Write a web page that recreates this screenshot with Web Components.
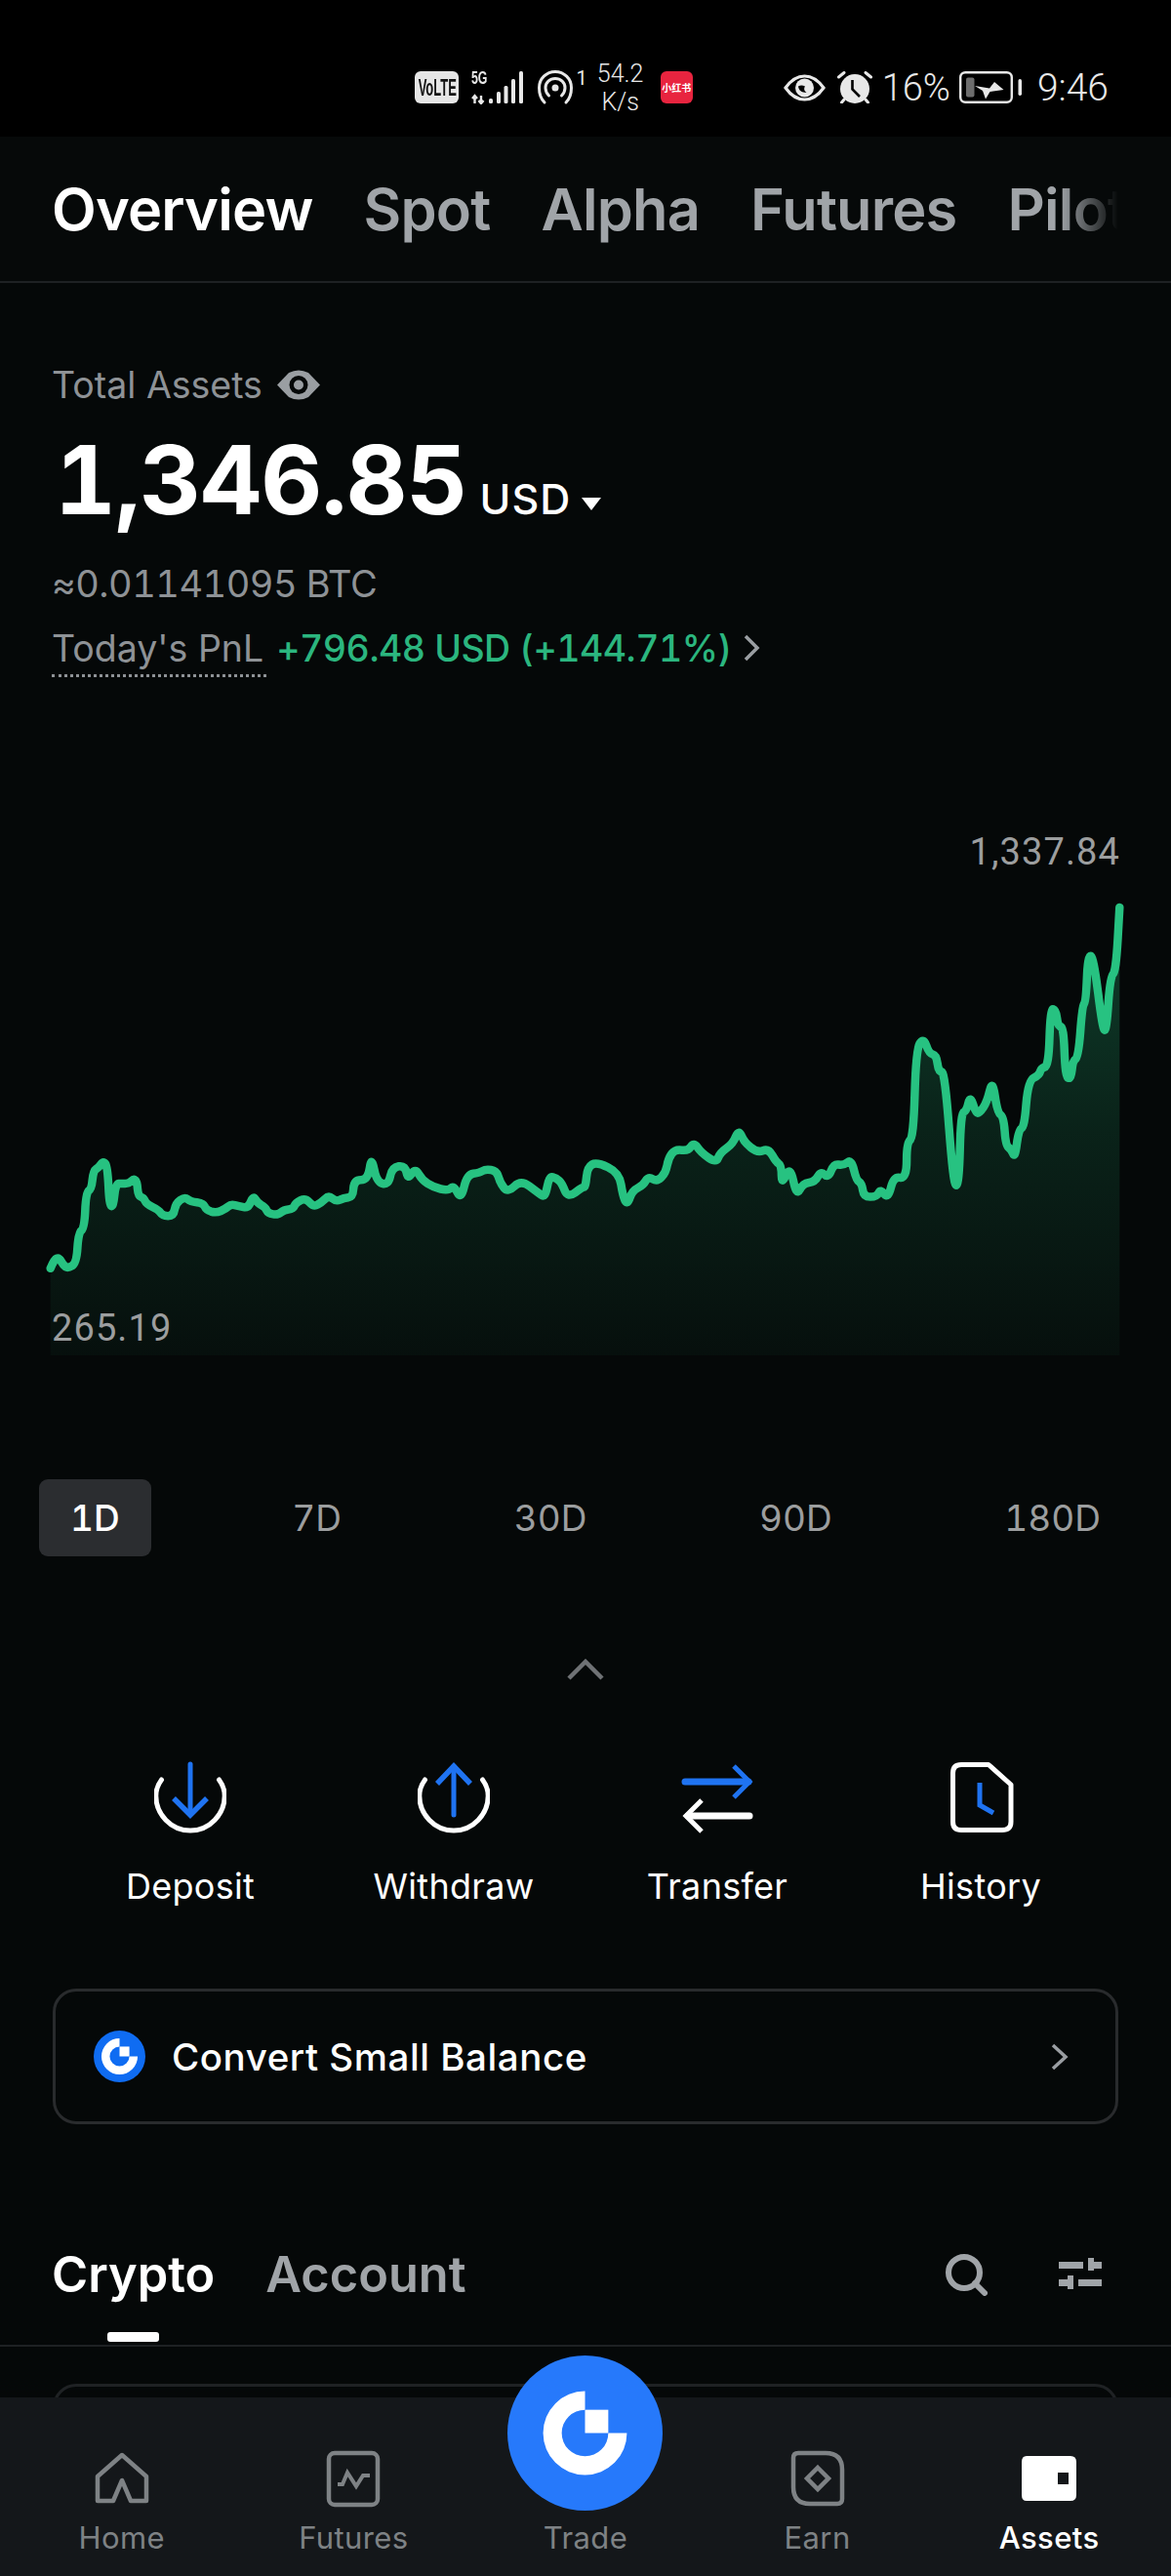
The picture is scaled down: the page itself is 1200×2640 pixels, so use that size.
<!DOCTYPE html>
<html>
<head>
<meta charset="utf-8">
<title>Assets</title>
<style>
  html, body { margin: 0; padding: 0; background: #050808; }
  body { position: relative; width: 1200px; height: 2640px; overflow: hidden; font-family: Inter, "Liberation Sans", sans-serif; color: #fff; }
</style>
</head>
<body>
<status-bar></status-bar>
<top-tabs>
  <tab-label active>Overview</tab-label>
  <tab-label>Spot</tab-label>
  <tab-label>Alpha</tab-label>
  <tab-label>Futures</tab-label>
  <tab-label>Pilot</tab-label>
</top-tabs>
<asset-summary></asset-summary>
<asset-chart></asset-chart>
<period-tabs></period-tabs>
<action-row>
  <action-item type="deposit">Deposit</action-item>
  <action-item type="withdraw">Withdraw</action-item>
  <action-item type="transfer">Transfer</action-item>
  <action-item type="history">History</action-item>
</action-row>
<convert-card>Convert Small Balance</convert-card>
<section-tabs></section-tabs>
<coin-card></coin-card>
<bottom-nav>
  <nav-item type="home">Home</nav-item>
  <nav-item type="futures">Futures</nav-item>
  <nav-item type="trade">Trade</nav-item>
  <nav-item type="earn">Earn</nav-item>
  <nav-item type="assets" active>Assets</nav-item>
</bottom-nav>

<script>
class BaseEl extends HTMLElement {
  constructor() {
    super();
    this.shadow = this.attachShadow({ mode: 'open' });
  }

  connectedCallback() {
    this.render();
  }
}

class GateLogo extends BaseEl {
  render() {
    const size = this.getAttribute('size');
    const r = +this.getAttribute('r');
    const i = +this.getAttribute('inner');
    this.shadow.innerHTML = `
      <style>:host { display: block; width: ${size}px; height: ${size}px; } svg { display: block; }</style>
      <svg width="${size}" height="${size}" viewBox="-100 -100 200 200">
        <circle r="100" fill="${this.getAttribute('color')}"/>
        <path fill="#fff" d="M0 ${-r}A${r} ${r} 0 1 0 ${r} 0H${i}A${i} ${i} 0 1 1 0 ${-i}Z"/>
        <rect x="0" y="${-i}" width="${i}" height="${i}" fill="#fff"/>
      </svg>`;
  }
}

class StatusBar extends BaseEl {
  render() {
    this.shadow.innerHTML = `
      <style>
        :host { display: flex; justify-content: flex-end; align-items: center; box-sizing: border-box; height: 140px; padding: 39px 64px 0 0; background: #000; color: #e8e8e8; font-family: Roboto, sans-serif; font-weight: 300; }
        svg { display: block; flex: none; }
        .volte { width: 45px; height: 33px; border-radius: 6px; background: #e6e6e6; color: #111; display: flex; align-items: center; justify-content: center; font: 700 24px "Liberation Sans", sans-serif; overflow: hidden; }
        .volte span { flex: none; transform: scaleX(.54); }
        .net { position: relative; width: 53px; height: 34px; margin-left: 13px; }
        .five { position: absolute; left: 0; top: -2px; font: 700 19px/18px "Liberation Sans", sans-serif; transform: scaleX(.65); transform-origin: left; }
        .net svg { position: absolute; left: 0; top: 0; }
        .hot { margin-left: 15px; }
        .one { font-size: 20px; margin: 0 0 20px 3px; line-height: 26px; font-weight: 400; }
        .speed { width: 62px; margin-left: 3px; text-align: center; font-size: 25px; line-height: 29px; font-weight: 300; }
        .red { width: 33px; height: 33px; margin-left: 10px; border-radius: 6px; background: #e8243f; color: #fff; font: 700 10px/33px "Noto Sans CJK SC", sans-serif; text-align: center; overflow: hidden; white-space: nowrap; }
        .eye { margin-left: 93px; }
        .alarm { margin-left: 12px; }
        .pct { margin-left: 10px; font-size: 38px; line-height: 40px; }
        .bat { margin-left: 9px; }
        .time { margin-left: 15px; font-size: 39px; line-height: 40px; }
      </style>
      <div class="volte"><span>VoLTE</span></div>
      <div class="net">
        <span class="five">5G</span>
        <svg width="53" height="34" viewBox="0 0 53 34" fill="#e8e8e8">
          <path d="M3.500 33V25M1 28L3.500 25L6 28M10 25V33M7.500 30L10 33L12.500 30" fill="none" stroke="#e8e8e8" stroke-width="2.400"/>
          <rect x="18" y="28" width="4" height="5" rx="1.500"/>
          <rect x="26" y="21" width="4" height="12" rx="1.500"/>
          <rect x="33.500" y="15" width="4" height="18" rx="1.500"/>
          <rect x="41" y="8" width="4" height="25" rx="1.500"/>
          <rect x="49" y="0" width="4" height="33" rx="1.500"/>
        </svg>
      </div>
      <svg class="hot" width="36" height="36" viewBox="0 0 36 36" fill="none" stroke="#e8e8e8" stroke-width="3" stroke-linecap="round">
        <path d="M7 33C3.500 29.500 1.500 24 1.500 18C1.500 8.500 9 1.500 18 1.500C27 1.500 34.500 8.500 34.500 18C34.500 24 32.500 29.500 29 33"/>
        <path d="M11.500 26C9 23.500 8 21 8 18C8 12.500 12.500 8.500 18 8.500C23.500 8.500 28 12.500 28 18C28 21 27 23.500 24.500 26"/>
        <circle cx="18" cy="18" r="3.500" fill="#e8e8e8" stroke="none"/>
      </svg>
      <span class="one">1</span>
      <div class="speed">54.2<br>K/s</div>
      <div class="red">小红书</div>
      <svg class="eye" width="43" height="28" viewBox="0 0 43 28">
        <path d="M2 14C8 5.500 14 2 21.500 2S35 5.500 41 14C35 22.500 29 26 21.500 26S8 22.500 2 14Z" fill="none" stroke="#e8e8e8" stroke-width="3.200"/>
        <circle cx="21.500" cy="14" r="9.500" fill="#e8e8e8"/>
        <path d="M15 12.500C15.500 17 19.500 19.500 23.500 18.500C21 17.500 20.500 14.500 22 12.500C19.500 11 17 11 15 12.500Z" fill="#000"/>
      </svg>
      <svg class="alarm" width="36" height="33" viewBox="0 0 36 33">
        <circle cx="18" cy="18" r="15" fill="#e8e8e8"/>
        <path d="M1.500 6L7 1.500M34.500 6L29 1.500M7 29L4.500 32M29 29L31.500 32" stroke="#e8e8e8" stroke-width="3" stroke-linecap="round"/>
        <path d="M15.500 9V18.500L23 26" fill="none" stroke="#000" stroke-width="2.600"/>
      </svg>
      <span class="pct">16%</span>
      <svg class="bat" width="65" height="33" viewBox="0 0 65 33">
        <rect x="1.200" y="1.200" width="52.600" height="30.600" rx="5" fill="none" stroke="#e8e8e8" stroke-width="2.400"/>
        <rect x="7" y="6.500" width="8.500" height="20" rx="2" fill="#6d6d6d"/>
        <path d="M16 15L31 17.500L36 11L45.500 19L31.500 21L27 28.500L24 20Z" fill="#e8e8e8"/>
        <rect x="60.500" y="8" width="3.500" height="17" rx="1.700" fill="#e8e8e8"/>
      </svg>
      <span class="time">9:46</span>`;
  }
}

class TabLabel extends BaseEl {
  render() {
    this.shadow.innerHTML = `
      <style>
        :host { display: block; flex: none; color: #a0a4a8; }
        :host([active]) { color: #fff; }
      </style>
      <slot></slot>`;
  }
}

class TopTabs extends BaseEl {
  render() {
    this.shadow.innerHTML = `
      <style>
        :host { display: block; box-sizing: border-box; height: 150px; padding: 0 54px 0 53px; border-bottom: 2px solid #1e2123; background: #060909; }
        .row { display: flex; gap: 52px; overflow: hidden; height: 148px; align-items: center; box-sizing: border-box;
          font-size: 59.500px; font-weight: 600; letter-spacing: -.8px; white-space: nowrap;
          -webkit-mask-image: linear-gradient(to right, #000 calc(100% - 60px), transparent); mask-image: linear-gradient(to right, #000 calc(100% - 60px), transparent); }
      </style>
      <div class="row"><slot></slot></div>`;
  }
}

class AssetSummary extends BaseEl {
  render() {
    this.shadow.innerHTML = `
      <style>
        :host { display: block; box-sizing: border-box; height: 540px; padding: 80px 54px 0 53px; color: #8e9296; font-size: 37.500px; }
        .head { display: flex; align-items: center; gap: 14px; height: 48px; }
        .total { display: flex; align-items: baseline; height: 124px; color: #fff; margin-top: 12px; }
        .num { font-size: 97.500px; font-weight: 700; line-height: 124px; letter-spacing: -1px; margin-left: 3px; font-feature-settings: "tnum"; }
        .unit { font-size: 43px; font-weight: 500; margin-left: 13px; letter-spacing: 1px; }
        .caret { width: 0; height: 0; border: 10.500px solid transparent; border-top: 13px solid #fff; border-bottom: 0; margin: 0 0 31px 11px; align-self: flex-end; }
        .btc { height: 48px; line-height: 48px; margin-top: 20px; font-size: 38px; letter-spacing: -.5px; font-feature-settings: "tnum"; }
        .pnl { display: flex; align-items: center; height: 48px; margin-top: 18px; }
        .pnl-l { position: relative; }
        .pnl-l::after { content: ""; position: absolute; left: 0; right: -3px; bottom: -7px; border-bottom: 3px dotted #8e9296; }
        .pnl-v { color: #2bb67f; font-weight: 500; margin-left: 13px; letter-spacing: -.5px; font-feature-settings: "tnum"; }
        svg { display: block; flex: none; }
      </style>
      <div class="head">
        <span>Total Assets</span>
        <svg width="46" height="33" viewBox="0 0 46 33">
          <path d="M1 16.500L13 4Q23 -1 33 4L45 16.500L33 29Q23 34 13 29Z" fill="#9a9ea2"/>
          <circle cx="23" cy="16.500" r="9.500" fill="#050808"/>
          <circle cx="23" cy="16.500" r="5" fill="#9a9ea2"/>
        </svg>
      </div>
      <div class="total"><span class="num">1,346.85</span><span class="unit">USD</span><span class="caret"></span></div>
      <div class="btc">≈0.01141095 BTC</div>
      <div class="pnl">
        <span class="pnl-l">Today's PnL</span>
        <span class="pnl-v">+796.48 USD (+144.71%)</span>
        <svg style="margin-left:11px" width="19" height="28" viewBox="0 0 19 28" fill="none" stroke="#9a9ea2" stroke-width="3.500"><path d="M3 2L15 14L3 26"/></svg>
      </div>`;
  }
}

class AssetChart extends BaseEl {
  buildPath() {
    const left = [[135,1270],[145,1245],[158,1240],[170,1262],[182,1270],[205,1255],[210,1170],[226,1160],[230,1060],[245,1050],[250,1000],[265,990],[277,972],[288,990],[293,1095],[303,1100],[310,1035],[325,1035],[345,1035],[358,1022],[367,1030],[370,1070],[385,1075],[392,1092],[425,1108],[435,1125],[465,1125],[470,1090],[495,1072],[510,1085],[545,1090],[552,1108],[578,1117],[605,1105],[618,1092],[640,1098],[665,1103],[678,1068],[690,1090],[710,1100],[718,1118],[745,1122],[760,1108],[785,1105],[792,1088],[818,1075],[840,1100],[860,1088],[880,1068],[900,1085],[920,1075],[945,1072],[948,1025],[985,1025],[995,958],[1008,1030],[1040,1040],[1050,990],[1085,985],[1092,1025],[1112,992],[1130,1025],[1160,1045],[1200,1055],[1215,1040],[1235,1080],[1250,1010],[1285,1005],[1300,995],[1330,1000],[1340,1035],[1360,1060],[1395,1025],[1440,1060],[1460,1075],[1470,1015],[1490,1020],[1505,1035],[1520,1075],[1560,1045]];
    const right = [[0,1045],[5,990],[30,975],[90,1005],[100,1070],[112,1095],[125,1055],[155,1040],[168,1015],[192,1030],[215,1005],[222,965],[240,940],[275,945],[290,920],[310,950],[350,978],[360,950],[395,925],[410,885],[425,920],[460,950],[490,938],[510,975],[525,985],[525,1040],[548,985],[565,1070],[582,1035],[615,1030],[630,1000],[650,1020],[665,980],[690,985],[712,968],[725,1025],[740,1035],[745,1072],[780,1072],[790,1050],[810,1078],[825,1015],[860,1022],[860,920],[878,910],[885,665],[905,630],[920,675],[940,680],[945,725],[962,725],[985,1040],[1000,1040],[1005,840],[1020,835],[1030,790],[1045,840],[1055,840],[1075,810],[1090,745],[1103,840],[1120,850],[1125,930],[1140,940],[1150,965],[1160,885],[1175,880],[1185,750],[1215,735],[1220,715],[1240,710],[1245,550],[1260,555],[1265,600],[1280,600],[1285,740],[1300,745],[1305,695],[1320,685],[1330,545],[1340,530],[1345,405],[1360,405],[1385,610],[1395,610],[1405,460],[1420,450],[1430,270]];
    const pts = left.map(([x, y]) => [x / 2.613, y / 2.703])
      .concat(right.map(([x, y]) => [600 + x / 2.613, y / 2.703]));
    let d = `M${pts[0][0].toFixed(1)} ${pts[0][1].toFixed(1)}`;
    for (let i = 1; i < pts.length - 1; i++) {
      const mx = (pts[i][0] + pts[i + 1][0]) / 2;
      const my = (pts[i][1] + pts[i + 1][1]) / 2;
      d += `Q${pts[i][0].toFixed(1)} ${pts[i][1].toFixed(1)} ${mx.toFixed(1)} ${my.toFixed(1)}`;
    }
    const last = pts[pts.length - 1];
    d += `L${last[0].toFixed(1)} ${last[1].toFixed(1)}`;
    return { d, x0: pts[0][0].toFixed(1), x1: last[0].toFixed(1) };
  }

  render() {
    const { d, x0, x1 } = this.buildPath();
    this.shadow.innerHTML = `
      <style>
        :host { display: block; position: relative; height: 570px; color: #9c9e9f; font: 38px Roboto, sans-serif; letter-spacing: 1.100px; }
        svg { display: block; position: absolute; left: 0; top: 0; }
        .hi { position: absolute; right: 52px; top: 21px; line-height: 44px; }
        .lo { position: absolute; left: 53px; top: 509px; line-height: 44px; }
      </style>
      <svg width="1200" height="570" viewBox="0 0 1200 570">
        <defs>
          <linearGradient id="fade" gradientUnits="userSpaceOnUse" x1="0" y1="100" x2="0" y2="559">
            <stop offset="0" stop-color="#27c281" stop-opacity=".3"/>
            <stop offset=".5" stop-color="#27c281" stop-opacity=".14"/>
            <stop offset="1" stop-color="#27c281" stop-opacity=".04"/>
          </linearGradient>
        </defs>
        <path d="${d}L${x1} 559L${x0} 559Z" fill="url(#fade)"/>
        <path d="${d}" fill="none" stroke="#27c281" stroke-width="8.500" stroke-linecap="round" stroke-linejoin="round"/>
      </svg>
      <span class="hi">1,337.84</span>
      <span class="lo">265.19</span>`;
  }
}

class PeriodTabs extends BaseEl {
  render() {
    const items = ['1D', '7D', '30D', '90D', '180D'];
    this.shadow.innerHTML = `
      <style>
        :host { display: flex; justify-content: space-between; box-sizing: border-box; height: 79px; margin-top: 116px; padding: 0 40px; color: #9c9e9f; font-size: 37px; letter-spacing: 0; font-feature-settings: "tnum"; }
        span { display: flex; align-items: center; padding: 0 32px; border-radius: 9px; }
        .on { background: #2b2d30; color: #fff; font-weight: 500; }
      </style>
      ${items.map((t, i) => `<span class="${i ? '' : 'on'}">${t}</span>`).join('')}`;
  }
}

class ActionItem extends BaseEl {
  icon(type) {
    const blue = '#1f73f1';
    if (type === 'deposit') {
      return `<path d="M7.500 19C3 25 1.800 30 1.800 35.500C1.800 54 17 71 37 71C57 71 72.200 54 72.200 35.500C72.200 30 71 25 66.500 19" fill="none" stroke="#fff" stroke-width="5" stroke-linecap="round"/>
        <path d="M37 3V52" stroke="${blue}" stroke-width="5" stroke-linecap="round"/>
        <path d="M20 38L37 55L54 38" fill="none" stroke="${blue}" stroke-width="5.500"/>`;
    }
    if (type === 'withdraw') {
      return `<path d="M7.500 19C3 25 1.800 30 1.800 35.500C1.800 54 17 71 37 71C57 71 72.200 54 72.200 35.500C72.200 30 71 25 66.500 19" fill="none" stroke="#fff" stroke-width="5" stroke-linecap="round"/>
        <path d="M37 5V55" stroke="${blue}" stroke-width="5" stroke-linecap="round"/>
        <path d="M20 23L37 5L54 23" fill="none" stroke="${blue}" stroke-width="5.500"/>`;
    }
    if (type === 'transfer') {
      return `<path d="M4 21H69" stroke="${blue}" stroke-width="7" stroke-linecap="round"/>
        <path d="M54 5L70 21L54 37" fill="none" stroke="${blue}" stroke-width="5"/>
        <path d="M70 56H7" stroke="#fff" stroke-width="7" stroke-linecap="round"/>
        <path d="M21 40L5 56L21 72" fill="none" stroke="#fff" stroke-width="5"/>`;
    }
    return `<path d="M12 3.500H40L63 24V62Q63 70.500 54 70.500H12Q3.500 70.500 3.500 62V12Q3.500 3.500 12 3.500Z" transform="translate(5,0)" fill="none" stroke="#fff" stroke-width="5" stroke-linejoin="round"/>
      <path d="M36 22V45L50 53" fill="none" stroke="${blue}" stroke-width="5"/>`;
  }

  render() {
    this.shadow.innerHTML = `
      <style>
        :host { display: flex; flex-direction: column; align-items: center; width: 270px; font-size: 36px; }
        svg { display: block; }
        .t { margin-top: 30px; line-height: 44px; letter-spacing: .3px; }
      </style>
      <svg width="74" height="76" viewBox="0 0 74 76">${this.icon(this.getAttribute('type'))}</svg>
      <span class="t"><slot></slot></span>`;
  }
}

class ActionRow extends BaseEl {
  render() {
    this.shadow.innerHTML = `
      <style>
        :host { display: block; padding: 0 60px; }
        .chev { display: block; margin: 105px auto 83px; }
        .row { display: flex; }
      </style>
      <svg class="chev" width="38" height="22" viewBox="0 0 38 22" fill="none" stroke="#6f7275" stroke-width="4.500"><path d="M2 20L19 3L36 20"/></svg>
      <div class="row"><slot></slot></div>`;
  }
}

class ConvertCard extends BaseEl {
  render() {
    this.shadow.innerHTML = `
      <style>
        :host { display: flex; align-items: center; box-sizing: border-box; height: 139px; margin: 83px 54px 0; padding: 0 47px 0 39px; border: 3px solid #292b2d; border-radius: 24px; font-size: 38.500px; font-weight: 500; letter-spacing: .55px; }
        .t { flex: 1; margin-left: 27px; }
        svg { display: block; }
      </style>
      <gate-logo size="53" r="70" inner="38" color="#0f6cf2"></gate-logo>
      <span class="t"><slot></slot></span>
      <svg width="20" height="30" viewBox="0 0 20 30" fill="none" stroke="#9a9ea2" stroke-width="3.500"><path d="M3 3L16 15L3 27"/></svg>`;
  }
}

class SectionTabs extends BaseEl {
  render() {
    this.shadow.innerHTML = `
      <style>
        :host { display: flex; align-items: flex-start; box-sizing: border-box; height: 228px; padding: 123px 71px 0 53px; border-bottom: 2px solid #1e2123; font-size: 50.500px; font-weight: 600; color: #a0a4a8; }
        .tab { display: flex; flex-direction: column; align-items: center; margin-right: 52px; line-height: 62px; }
        .on { color: #fff; }
        .bar { width: 53px; height: 10px; margin-top: 28px; border-radius: 3px; background: #fff; }
        .space { flex: 1; }
        svg { display: block; }
        .search { margin: 9px 73px 0 0; }
        .filter { margin-top: 14px; }
      </style>
      <div class="tab on">Crypto<div class="bar"></div></div>
      <div class="tab">Account</div>
      <div class="space"></div>
      <svg class="search" width="44" height="44" viewBox="0 0 44 44" fill="none" stroke="#a0a4a8" stroke-width="6"><circle cx="20" cy="20" r="16"/><path d="M31 31L41 41" stroke-linecap="round"/></svg>
      <svg class="filter" width="44" height="34" viewBox="0 0 44 34" fill="#a0a4a8">
        <rect x="0" y="4" width="25" height="7"/><rect x="30" y="0" width="6" height="13"/><rect x="36" y="4" width="8" height="7"/>
        <rect x="0" y="22" width="9" height="7"/><rect x="9" y="18" width="6" height="14"/><rect x="20" y="22" width="24" height="7"/>
      </svg>`;
  }
}

class CoinCard extends BaseEl {
  render() {
    this.shadow.innerHTML = `
      <style>
        :host { display: block; box-sizing: border-box; height: 120px; margin: 38px 54px 0; border: 3px solid #1f2224; border-radius: 24px; }
      </style>`;
  }
}

class NavItem extends BaseEl {
  icon(type) {
    const c = '#7e8285';
    if (type === 'home') {
      return `<path d="M30 5L55 27V52H39L30 31L21 52H5V27Z" fill="none" stroke="${c}" stroke-width="4.500" stroke-linejoin="round"/>`;
    }
    if (type === 'futures') {
      return `<rect x="5" y="3" width="50" height="53" rx="6" fill="none" stroke="${c}" stroke-width="4.500"/>
        <path d="M14 35H19L24 23L33 37L40 26H47" fill="none" stroke="${c}" stroke-width="4"/>`;
    }
    if (type === 'earn') {
      return `<path d="M5 8Q5 3 10 3H38Q55 3 55 20V50Q55 55 50 55H22Q5 55 5 38Z" fill="none" stroke="${c}" stroke-width="4.500"/>
        <path d="M30 18L41 29L30 40L19 29Z" fill="none" stroke="${c}" stroke-width="4.500"/>`;
    }
    if (type === 'assets') {
      return `<path fill-rule="evenodd" fill="#fff" d="M7 6H52Q58 6 58 12V46Q58 52 52 52H7Q2 52 2 46V12Q2 6 7 6ZM39 23V35H50V23Z"/>`;
    }
    return '';
  }

  render() {
    const type = this.getAttribute('type');
    const blob = type === 'trade'
      ? '<gate-logo class="fab" size="159" r="54" inner="30" color="#2679fb"></gate-logo>'
      : `<svg width="60" height="60" viewBox="0 0 60 60">${this.icon(type)}</svg>`;
    this.shadow.innerHTML = `
      <style>
        :host { display: flex; flex-direction: column; align-items: center; position: relative; color: #7e8285; font-size: 31px; letter-spacing: .4px; }
        :host([active]) { color: #fff; font-weight: 500; }
        svg { display: block; }
        .box { width: 60px; height: 60px; }
        .t { margin-top: 11px; line-height: 38px; }
        .fab { position: absolute; left: 50%; top: -97px; margin-left: -80px; }
      </style>
      <div class="box">${blob}</div>
      <span class="t"><slot></slot></span>`;
  }
}

class BottomNav extends BaseEl {
  render() {
    this.shadow.innerHTML = `
      <style>
        :host { display: grid; grid-template-columns: repeat(5, 1fr); position: absolute; left: 0; right: 0; bottom: 0; box-sizing: border-box; height: 183px; padding: 54px 6px 0; background: #14171a; }
      </style>
      <slot></slot>`;
  }
}

customElements.define('gate-logo', GateLogo);
customElements.define('status-bar', StatusBar);
customElements.define('tab-label', TabLabel);
customElements.define('top-tabs', TopTabs);
customElements.define('asset-summary', AssetSummary);
customElements.define('asset-chart', AssetChart);
customElements.define('period-tabs', PeriodTabs);
customElements.define('action-item', ActionItem);
customElements.define('action-row', ActionRow);
customElements.define('convert-card', ConvertCard);
customElements.define('section-tabs', SectionTabs);
customElements.define('coin-card', CoinCard);
customElements.define('nav-item', NavItem);
customElements.define('bottom-nav', BottomNav);
</script>
</body>
</html>
